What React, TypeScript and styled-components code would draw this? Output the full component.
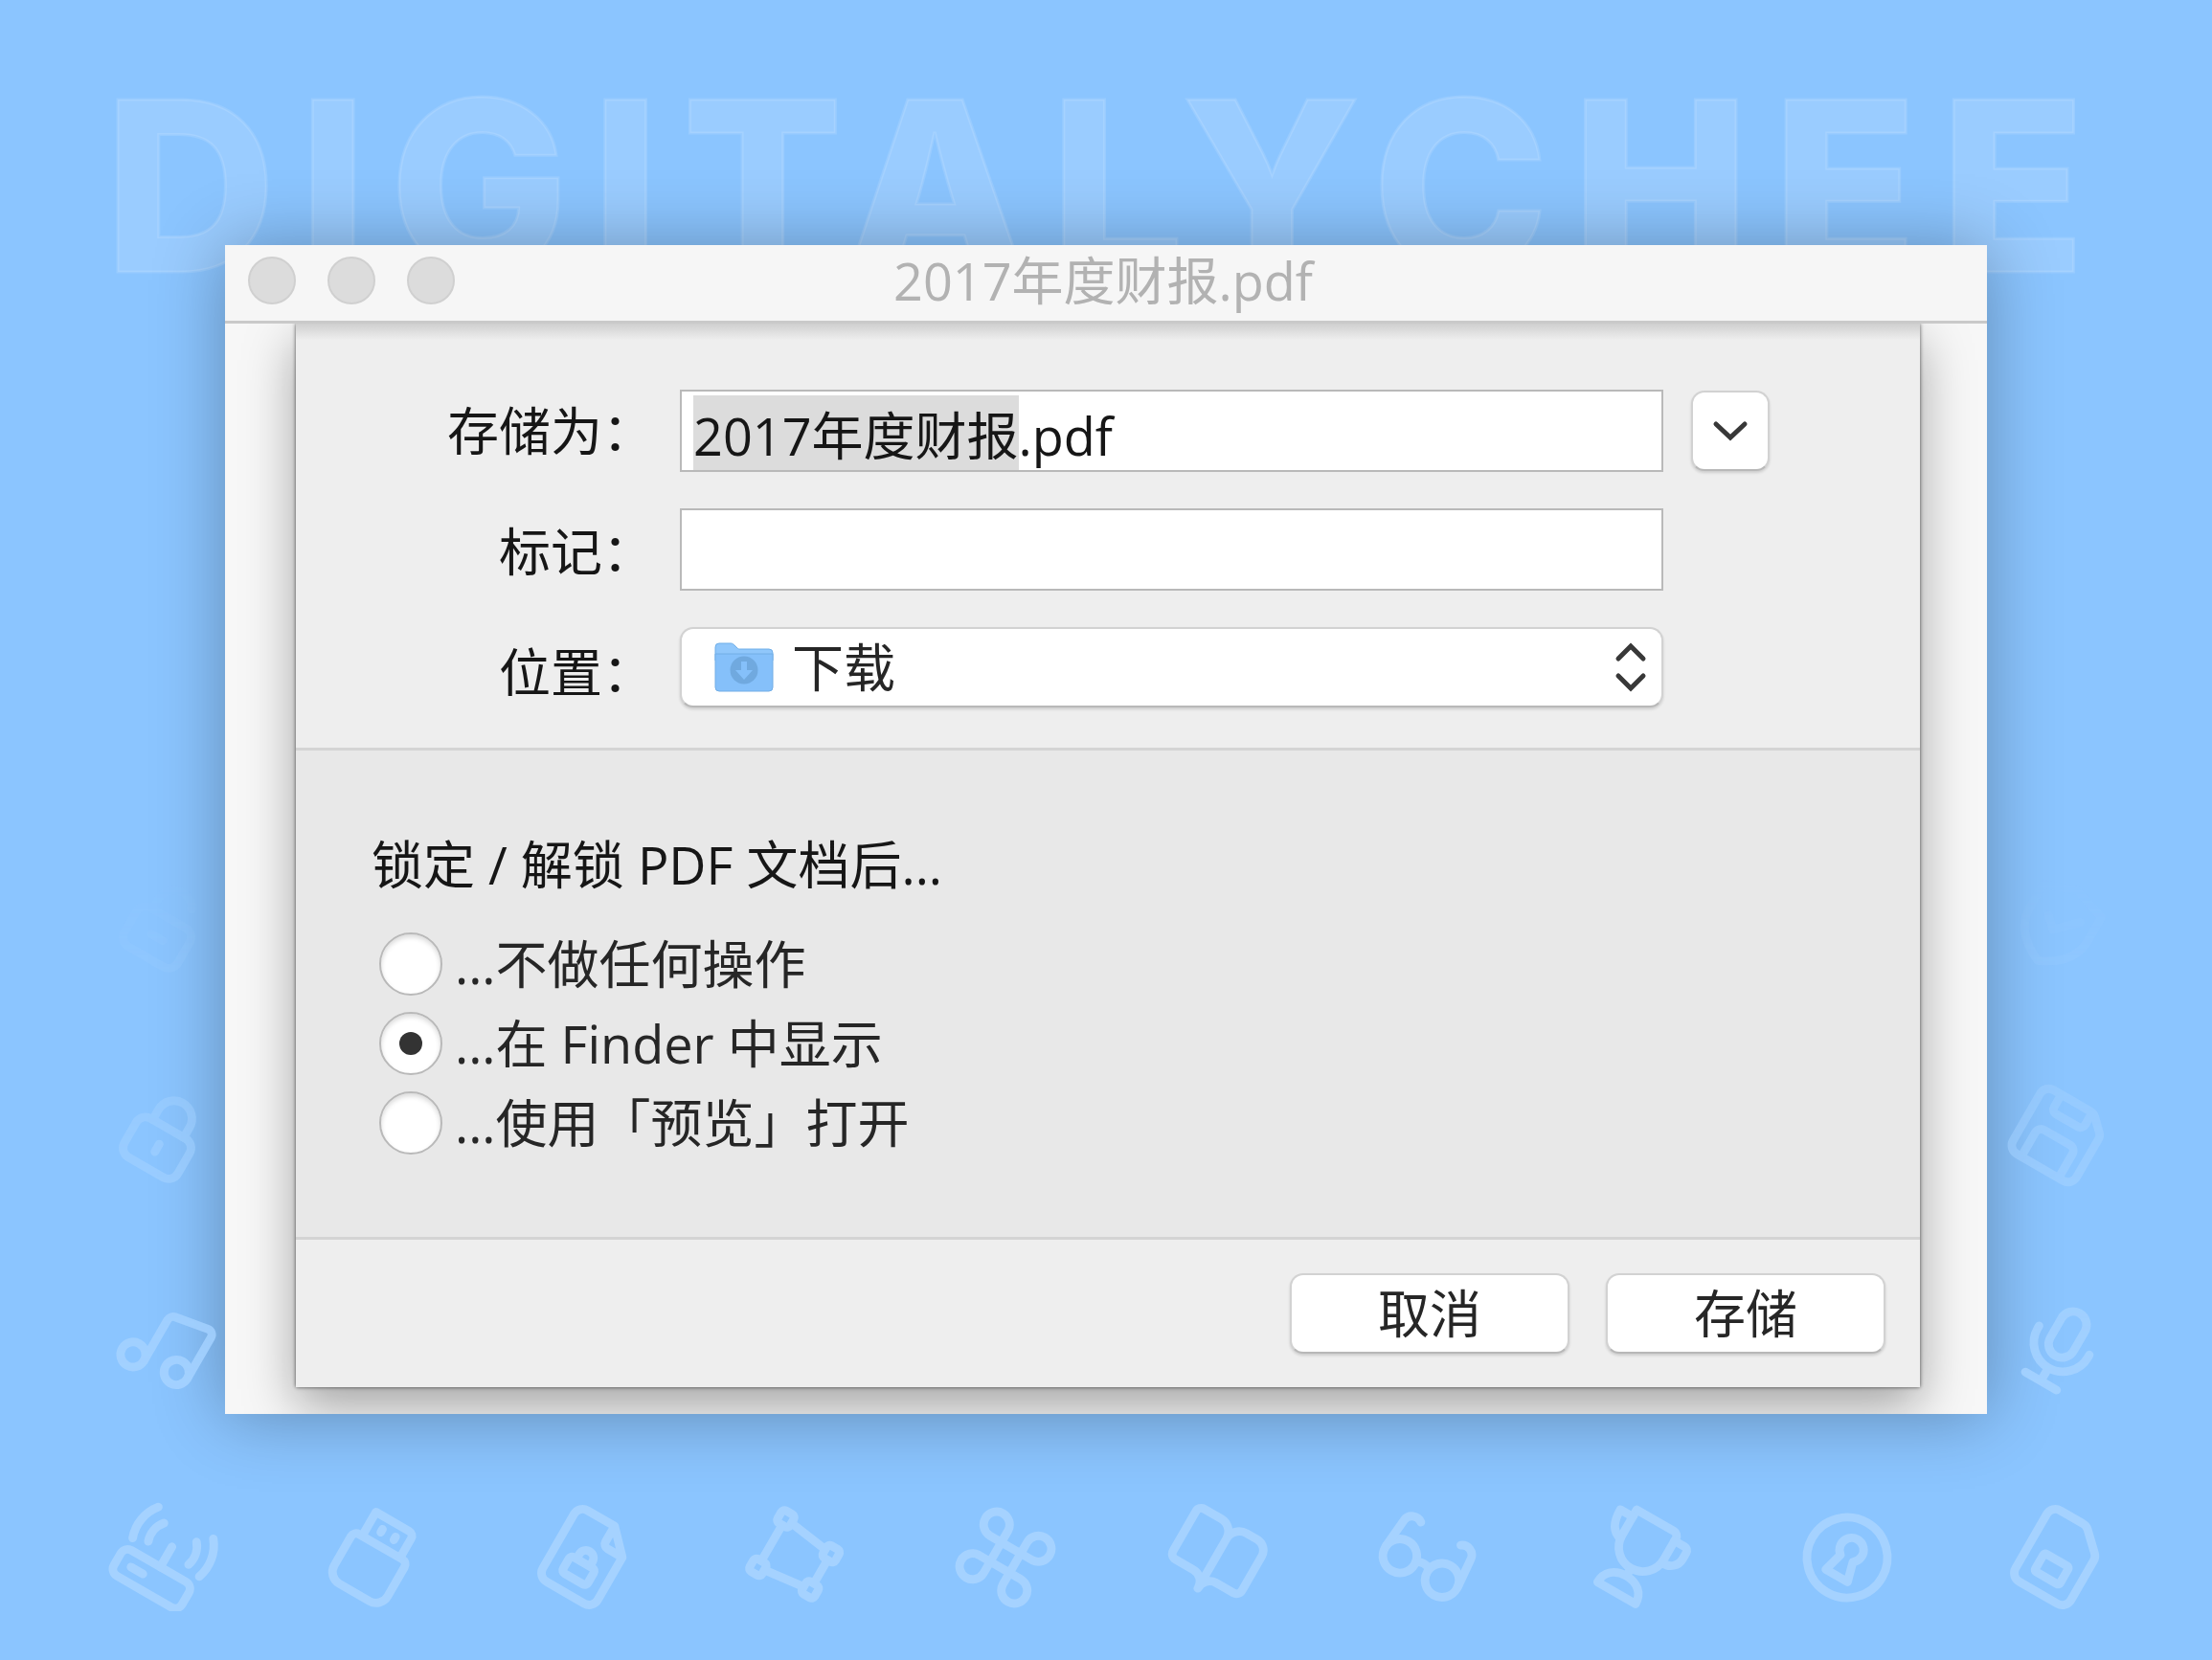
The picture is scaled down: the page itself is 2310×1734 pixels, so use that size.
import React, { useEffect, useRef, useState } from 'react';
import styled, { createGlobalStyle } from 'styled-components';

const GlobalStyle = createGlobalStyle`
  *, *::before, *::after { box-sizing: border-box; }
  body {
    margin: 0;
    background: #8bc5ff;
    font-family: 'Open Sans', 'Noto Sans CJK SC', sans-serif;
    font-size: 54px;
    color: #161616;
  }
  button, input, select { font: inherit; color: inherit; margin: 0; }
`;

const Page = styled.div`
  display: grid;
  min-height: 100vh;
  overflow: hidden;
`;

/* ---------- Backdrop ---------- */

const Backdrop = styled.div`
  grid-area: 1 / 1;
  min-width: 0;
  display: flex;
  flex-direction: column;
  justify-content: space-between;
  padding: 64px 105px 51px 109px;
`;

const Wordmark = styled.div`
  font-family: Inter, sans-serif;
  font-weight: 800;
  font-size: 248px;
  line-height: 260px;
  letter-spacing: 24px;
  white-space: nowrap;
  color: rgba(255, 255, 255, 0.13);
  -webkit-text-stroke: 3px rgba(255, 255, 255, 0.12);
`;

const GlyphRows = styled.div`
  display: flex;
  flex-direction: column;
  gap: 108px;
  padding-left: 6px;
  mask-image: linear-gradient(to bottom, transparent 0, rgba(0, 0, 0, 0.16) 90px, rgba(0, 0, 0, 0.5) 270px, #000 600px);
`;

const GlyphRow = styled.div`
  display: flex;
  justify-content: space-between;
`;

const GlyphSvg = styled.svg`
  width: 112px;
  height: 112px;
  overflow: visible;
  fill: none;
  stroke: #a5d2ff;
  stroke-width: 1.9;
  stroke-linecap: round;
  stroke-linejoin: round;
`;

const glyphs: Record<string, React.ReactNode> = {
  router: (
    <>
      <rect x="3.2" y="14.2" width="17.6" height="6.6" rx="1.8" />
      <path d="M12.4 9v5.2M6.7 17.5h3.1M5.3 2.8a9.2 9.2 0 0 0-1.5 8.9M19.5 2.8a9.2 9.2 0 0 1 1.5 8.9M8.2 5.3a5.4 5.4 0 0 0-1 5.3M16.6 5.3a5.4 5.4 0 0 1 1 5.3" />
    </>
  ),
  usb: (
    <>
      <path d="M6.4 9.2h11.2a1.3 1.3 0 0 1 1.3 1.3V18a3 3 0 0 1-3 3H8.1a3 3 0 0 1-3-3v-7.5a1.3 1.3 0 0 1 1.3-1.3z" />
      <path d="M7.2 9V3h8.6A1.2 1.2 0 0 1 17 4.2V9M10.4 5.6v.8M13.8 5.6v.8" />
    </>
  ),
  lockedFile: (
    <>
      <path d="M14.2 2.6h-7A2.2 2.2 0 0 0 5 4.8v14A2.2 2.2 0 0 0 7.2 21H17a2.2 2.2 0 0 0 2.2-2.2v-11zv4a1.2 1.2 0 0 0 1.2 1.2h3.8" />
      <rect x="9" y="13.2" width="6.4" height="4.2" rx=".8" />
      <path d="M10.5 13v-1a1.7 1.7 0 0 1 3.4 0v1" />
    </>
  ),
  nodes: (
    <>
      <rect x="4.3" y="3.9" width="3.2" height="3.2" rx=".8" />
      <rect x="17" y="5.6" width="3.2" height="3.2" rx=".8" />
      <rect x="17" y="14.9" width="3.2" height="3.2" rx=".8" />
      <rect x="4.3" y="16.4" width="3.2" height="3.2" rx=".8" />
      <path d="M5.9 7.2v9.1M7.6 5.7l9.3 1.3M18.6 8.9v5.9M7.6 17.8l9.3-1.1" />
    </>
  ),
  command: (
    <path d="M9.5 9.5h5v5h-5zM9.5 9.5h-3a2.9 2.9 0 1 1 3-3zM14.5 9.5v-3a2.9 2.9 0 1 1 3 3zM14.5 14.5h3a2.9 2.9 0 1 1-3 3zM9.5 14.5v3a2.9 2.9 0 1 1-3-3z" />
  ),
  book: (
    <path d="M11.9 20V7.2a3.3 3.3 0 0 0-3.3-3.3H4.3a1.4 1.4 0 0 0-1.4 1.4v10.2a1.4 1.4 0 0 0 1.4 1.4h4.6a3 3 0 0 1 3 3.1a3 3 0 0 1 3-3.1h4.4a1.4 1.4 0 0 0 1.4-1.4V6.700a2.800 2.800 0 0 0-2.800-2.800h-2.700a3.300 3.300 0 0 0-3.300 3.300" />
  ),
  glasses: (
    <>
      <circle cx="6.6" cy="14.7" r="3.8" />
      <circle cx="17.5" cy="14.7" r="3.8" />
      <path d="M10.6 13.9q1.5-.8 3 0M2.8 14.3l.6-7a2.2 2.2 0 0 1 3.5-1.5M21.3 14.3l-.6-7a2.2 2.2 0 0 0-3.5-1.5" />
    </>
  ),
  trophy: (
    <g transform="translate(.9 -.5)">
      <path d="M5.8 3.2h9.6a1.2 1.2 0 0 1 1.2 1.2v5.4a5.4 5.4 0 0 1-10.8 0z" />
      <path d="M5.8 5H2.6c0 3 .8 5 3.2 5.6M16.6 5h2.6a1 1 0 0 1 1 1v1.6a3 3 0 0 1-3.4 3M11.2 15.3v1.9M6.3 21.600h9.800c0-2.700-2-4.400-4.900-4.400s-4.900 1.700-4.900 4.400z" />
    </g>
  ),
  keyhole: (
    <>
      <circle cx="12" cy="12" r="9" />
      <path d="M10.4 12.2a2.7 2.7 0 1 1 3.2 0l1.2 4.5H9.2z" />
    </>
  ),
  simCard: (
    <>
      <path d="M7.2 2.6H13a2.2 2.2 0 0 1 1.6.6L18.6 7a2.2 2.2 0 0 1 .7 1.6v10.2a2.2 2.2 0 0 1-2.2 2.2H7.2A2.2 2.2 0 0 1 5 18.8v-14a2.2 2.2 0 0 1 2.2-2.2z" />
      <rect x="8.9" y="12.6" width="6.4" height="4.6" rx=".5" />
    </>
  ),
  music: (
    <>
      <circle cx="6.9" cy="16.9" r="2.8" />
      <circle cx="17.3" cy="15.5" r="2.8" />
      <path d="M9.7 16.9V6.4A1.5 1.5 0 0 1 11 4.9l7.6-1.3a1.3 1.3 0 0 1 1.5 1.3v10.6" />
    </>
  ),
  microphone: (
    <>
      <rect x="9.5" y="3" width="6" height="11" rx="3" />
      <path d="M6 10v.6a6.5 6.5 0 0 0 13 0V10M12.5 17.2v3.3M8.5 20.5h8.1" />
    </>
  ),
  padlock: (
    <>
      <rect x="5.1" y="10" width="13.8" height="10" rx="2.4" />
      <path d="M8 10V7.4a4 4 0 0 1 8 0V10M12 14v2" />
    </>
  ),
  floppy: (
    <>
      <path d="M6 3.5h9.6a2 2 0 0 1 1.4.6l2.6 2.5a2 2 0 0 1 .6 1.5v9.7A2.2 2.2 0 0 1 18 20H6a2.2 2.2 0 0 1-2.2-2.2V5.7A2.2 2.2 0 0 1 6 3.5z" />
      <path d="M8 3.7v3a1.2 1.2 0 0 0 1.2 1.2h5.6A1.2 1.2 0 0 0 16 6.7v-3M7.2 19.8v-6a1.5 1.5 0 0 1 1.5-1.5h6.6a1.5 1.5 0 0 1 1.5 1.5v6" />
    </>
  ),
  openPadlock: (
    <>
      <rect x="5.1" y="10" width="13.8" height="10" rx="2.4" />
      <path d="M8 10V7.4a4 4 0 0 1 7.6-1.7M10.5 15h3" />
    </>
  ),
  shield: (
    <>
      <path d="M12 3l7.5 2.5v6c0 4.5-3 7.5-7.5 9.5-4.5-2-7.5-5-7.5-9.5v-6z" />
      <path d="M9 11l2.5 2.3L16 8.8" />
    </>
  ),
};

const glyphRows = [
  ['openPadlock', 'shield'],
  ['padlock', 'floppy'],
  ['music', 'microphone'],
  ['router', 'usb', 'lockedFile', 'nodes', 'command', 'book', 'glasses', 'trophy', 'keyhole', 'simCard'],
];

const Glyph = ({ name }: { name: string }) => (
  <GlyphSvg viewBox="0 0 24 24">
    <g transform="rotate(30 12 12)">{glyphs[name]}</g>
  </GlyphSvg>
);

/* ---------- Window ---------- */

const Stage = styled.main`
  grid-area: 1 / 1;
  min-width: 0;
  padding: 256px 235px;
`;

const Window = styled.section`
  background: #f7f7f7;
  box-shadow: 0 2px 70px rgba(0, 0, 0, 0.3);
`;

const TitleBar = styled.header`
  display: grid;
  grid-template-columns: 1fr auto 1fr;
  align-items: center;
  height: 82px;
  padding: 0 30px 5px 24px;
  background: #f6f6f6;
  border-bottom: 3px solid #c9c9c9;
`;

const Lights = styled.div`
  display: flex;
  gap: 33px;
`;

const Light = styled.button`
  width: 50px;
  height: 50px;
  padding: 0;
  border: 2px solid #d0d0d0;
  border-radius: 50%;
  background: #dcdcdc;
`;

const Title = styled.h1`
  margin: 0;
  font-size: 54px;
  line-height: 74px;
  font-weight: 400;
  color: #b2b2b2;
`;

const WindowBody = styled.div`
  overflow: hidden;
  padding: 0 70px 28px 74px;
`;

const Sheet = styled.form`
  background: #eeeeee;
  box-shadow: 0 0 4px rgba(0, 0, 0, 0.65), 0 20px 50px rgba(0, 0, 0, 0.34);
`;

const FileSection = styled.div`
  display: grid;
  grid-template-columns: 380px 1fr auto;
  column-gap: 21px;
  align-items: start;
  padding: 69px 157px 36px 0;
  border-bottom: 3px solid #d4d4d4;
  background: linear-gradient(#cfcfcf, rgba(238, 238, 238, 0) 17px);
`;

const LabelColumn = styled.div`
  display: flex;
  flex-direction: column;
  align-items: flex-end;
  gap: 40px;
  padding-right: 6px;
`;

const FieldLabel = styled.label`
  line-height: 86px;
  white-space: nowrap;
`;

const ControlColumn = styled.div`
  display: flex;
  flex-direction: column;
  gap: 38px;
  min-width: 0;
`;

const TextField = styled.input`
  width: 100%;
  height: 86px;
  padding: 6px 12px 2px;
  border: 2px solid #b9b9b9;
  border-radius: 0;
  outline: none;
  background: #fff;
  line-height: 70px;

  &::selection {
    background: #dcdcdc;
    color: #161616;
  }
`;

const raised = `
  border: 2px solid #d2d2d2;
  border-bottom-color: #b8b8b8;
  border-radius: 14px;
  background: #fff;
  box-shadow: 0 2px 3px rgba(0, 0, 0, 0.14);
`;

const PopUp = styled.div`
  ${raised}
  display: flex;
  align-items: center;
  height: 84px;
  padding: 0 15px 0 34px;
`;

const PopUpSelect = styled.select`
  flex: 1;
  min-width: 0;
  padding: 0 0 0 19px;
  border: 0;
  outline: none;
  appearance: none;
  background: transparent;
  line-height: 74px;
  color: #262626;
`;

const Drawing = styled.svg<{ $w: number; $h: number }>`
  display: block;
  flex: none;
  width: ${(p) => p.$w}px;
  height: ${(p) => p.$h}px;
`;

const DisclosureButton = styled.button`
  ${raised}
  display: grid;
  place-items: center;
  width: 82px;
  height: 84px;
  padding: 0;
  margin: 1px 0 0 8px;
`;

const OptionsSection = styled.fieldset`
  min-width: 0;
  margin: 0;
  padding: 82px 79px 86px;
  border: 0;
  border-bottom: 3px solid #d4d4d4;
  background: #e8e8e8;
`;

const Legend = styled.legend`
  float: left;
  width: 100%;
  padding: 0;
  margin-bottom: 34px;
  line-height: 74px;
`;

const OptionList = styled.div`
  clear: both;
  display: flex;
  flex-direction: column;
  align-items: flex-start;
  gap: 17px;
  padding-left: 8px;
`;

const Option = styled.label`
  display: flex;
  align-items: center;
  gap: 13px;
  line-height: 66px;
  color: #262626;
`;

const Radio = styled.input`
  appearance: none;
  flex: none;
  display: grid;
  place-items: center;
  width: 66px;
  height: 66px;
  border: 2px solid #b9b9b9;
  border-radius: 50%;
  background: #fff;
  box-shadow: inset 0 3px 5px rgba(0, 0, 0, 0.14);

  &:checked::before {
    content: '';
    width: 24px;
    height: 24px;
    border-radius: 50%;
    background: #333;
  }
`;

const Actions = styled.footer`
  display: flex;
  justify-content: flex-end;
  gap: 38px;
  padding: 35px 36px 35px;
`;

const ActionButton = styled.button`
  ${raised}
  width: 292px;
  height: 84px;
  padding: 0;
  line-height: 74px;
  color: #262626;
`;

const FolderIcon = () => (
  <Drawing $w={62} $h={52} viewBox="0 0 62 52" aria-hidden="true">
    <path d="M1 5a4 4 0 0 1 4-4h12c2 0 3 1 4 2l3 3c1 1 2 1 3 1h30a4 4 0 0 1 4 4v8H1z" fill="#90c7fb" stroke="#6faee8" />
    <path d="M1 12h60v35a4 4 0 0 1-4 4H5a4 4 0 0 1-4-4z" fill="#85c0fa" stroke="#72aee6" />
    <circle cx="31" cy="29" r="14.5" fill="#70a9df" />
    <path d="M28 20h6v9h6l-9 10-9-10h6z" fill="#85c0fa" />
  </Drawing>
);

const ChevronDown = () => (
  <Drawing $w={38} $h={24} viewBox="0 0 38 24" fill="none" stroke="#383838" strokeWidth="5" strokeLinecap="round" aria-hidden="true">
    <path d="M4 5l15 14L34 5" />
  </Drawing>
);

const UpDownArrows = () => (
  <Drawing $w={34} $h={52} viewBox="0 0 34 52" fill="none" stroke="#383838" strokeWidth="5" strokeLinecap="round" aria-hidden="true">
    <path d="M4 17L17 4l13 13M4 35l13 13 13-13" />
  </Drawing>
);

const FILE_STEM = '2017年度财报';
const FILE_NAME = `${FILE_STEM}.pdf`;

const afterActions = [
  { value: 'none', text: '...不做任何操作' },
  { value: 'finder', text: '...在 Finder 中显示' },
  { value: 'preview', text: '...使用「预览」打开' },
];

export default function App() {
  const nameRef = useRef<HTMLInputElement>(null);
  const [name, setName] = useState(FILE_NAME);
  const [tags, setTags] = useState('');
  const [after, setAfter] = useState('finder');

  useEffect(() => {
    nameRef.current?.focus();
    nameRef.current?.setSelectionRange(0, FILE_STEM.length);
  }, []);

  return (
    <>
      <GlobalStyle />
      <Page>
        <Backdrop aria-hidden="true">
          <Wordmark>DIGITALYCHEE</Wordmark>
          <GlyphRows>
            {glyphRows.map((row) => (
              <GlyphRow key={row[0]}>
                {row.map((glyph) => (
                  <Glyph key={glyph} name={glyph} />
                ))}
              </GlyphRow>
            ))}
          </GlyphRows>
        </Backdrop>

        <Stage>
          <Window>
            <TitleBar>
              <Lights>
                <Light type="button" aria-label="关闭" />
                <Light type="button" aria-label="最小化" />
                <Light type="button" aria-label="缩放" />
              </Lights>
              <Title>{FILE_NAME}</Title>
            </TitleBar>
            <WindowBody>
              <Sheet onSubmit={(e) => e.preventDefault()}>
                <FileSection>
                  <LabelColumn>
                    <FieldLabel htmlFor="file-name">存储为：</FieldLabel>
                    <FieldLabel htmlFor="file-tags">标记：</FieldLabel>
                    <FieldLabel htmlFor="file-place">位置：</FieldLabel>
                  </LabelColumn>
                  <ControlColumn>
                    <TextField id="file-name" ref={nameRef} value={name} spellCheck={false} onChange={(e) => setName(e.target.value)} />
                    <TextField id="file-tags" value={tags} onChange={(e) => setTags(e.target.value)} />
                    <PopUp>
                      <FolderIcon />
                      <PopUpSelect id="file-place" defaultValue="downloads">
                        <option value="downloads">下载</option>
                      </PopUpSelect>
                      <UpDownArrows />
                    </PopUp>
                  </ControlColumn>
                  <DisclosureButton type="button" aria-label="展开">
                    <ChevronDown />
                  </DisclosureButton>
                </FileSection>

                <OptionsSection>
                  <Legend>锁定 / 解锁 PDF 文档后...</Legend>
                  <OptionList>
                    {afterActions.map((action) => (
                      <Option key={action.value}>
                        <Radio
                          type="radio"
                          name="after"
                          value={action.value}
                          checked={after === action.value}
                          onChange={() => setAfter(action.value)}
                        />
                        {action.text}
                      </Option>
                    ))}
                  </OptionList>
                </OptionsSection>

                <Actions>
                  <ActionButton type="button">取消</ActionButton>
                  <ActionButton type="submit">存储</ActionButton>
                </Actions>
              </Sheet>
            </WindowBody>
          </Window>
        </Stage>
      </Page>
    </>
  );
}
